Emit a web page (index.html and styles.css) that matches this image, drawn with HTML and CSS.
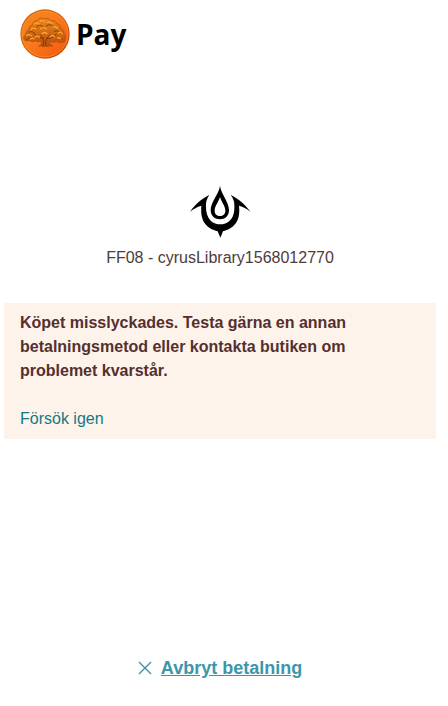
FILE: index.html
```html
<!DOCTYPE html>
<html lang="sv">
<head>
<meta charset="utf-8">
<meta name="viewport" content="width=device-width, initial-scale=1">
<title>Pay</title>
<link rel="stylesheet" href="styles.css">
</head>
<body>
<div class="page">
  <header class="brand">
    <svg class="brand-mark" viewBox="0 0 150 150" aria-hidden="true">
      <defs>
        <linearGradient id="coin" x1="0" y1="0" x2="1" y2="1">
          <stop offset="0" stop-color="#f08a1c"/>
          <stop offset=".45" stop-color="#fb7a1c"/>
          <stop offset="1" stop-color="#f2560f"/>
        </linearGradient>
        <linearGradient id="rim" x1="0" y1="0" x2="1" y2="1">
          <stop offset="0" stop-color="#c9660f"/>
          <stop offset=".5" stop-color="#e0630c"/>
          <stop offset="1" stop-color="#b93606"/>
        </linearGradient>
        <linearGradient id="leaf" x1="0" y1="0" x2="0" y2="1">
          <stop offset="0" stop-color="#ea851a"/>
          <stop offset="1" stop-color="#b9500d"/>
        </linearGradient>
      </defs>
      <circle cx="75" cy="75" r="74" fill="url(#rim)"/>
      <circle cx="75" cy="75" r="69" fill="url(#coin)" stroke="#ff9e38" stroke-width="2"/>
      <path fill="url(#leaf)" stroke="#a3480a" stroke-width="2" d="M13 92c-4-6-1-13 5-15-2-8 3-14 9-14-1-9 4-15 11-15 0-9 7-14 14-13 4-8 14-10 21-5 8-4 17-1 20 6 9-3 16 2 18 9 8 1 12 7 11 14 8 2 11 9 9 15 6 3 8 11 4 16 2 6-3 10-9 10-8 1-14-1-17-3-6 4-14 3-18 0l-2 6c2 4 6 6 10 8-8-1-11-1-14 2-5-2-11-2-16 0-4-3-8-3-13-1 5-3 9-6 9-10l-2-6c-6 3-12 2-16-1-7 4-15 3-19-1-7 2-14 2-15-2z"/>
      <g fill="none" stroke="#87380a" stroke-width="3" stroke-linecap="round">
        <path d="M69 110c5-15 0-24-8-33M77 110c-2-14 3-24 13-33M71 88c-11 0-21-5-27-13M80 89c13 0 22-5 29-14M20 91c8-7 15-5 20 0M108 91c7-6 13-5 20 0M27 70c8-5 14-1 17 5M103 67c7-4 13-1 17 5M50 54c4-7 13-7 19-1M79 51c6-6 15-5 20 1"/>
      </g>
      <g fill="none" stroke="#ffa332" stroke-width="4" stroke-linecap="round">
        <path d="M20 80c5-5 9-4 14 0M33 62c5-6 9-6 14-2M42 46c5-5 10-5 15-1M60 38c5-5 11-4 15 1M82 41c6-4 11-2 14 3M99 54c6-3 11 0 13 4M115 72c5-4 9-2 12 2M62 60c5-5 12-5 17 0M91 83c5-4 9-4 12 0M46 84c5-4 9-4 12 1M31 90c4-3 8-3 11 0M112 88c4-3 8-2 10 1M66 74c5-4 11-4 15 0"/>
      </g>
    </svg>
    <span class="brand-name">Pay</span>
  </header>

  <main class="content">
    <section class="merchant">
      <svg class="merchant-mark" viewBox="18 12 180 156" aria-hidden="true">
        <path d="M18 89C34 67 52 51 76 39C69 50 66 58 66 68C65 88 69 105 80 116C89 124 98 127 109 127C120 127 128 124 137 116C149 105 152 88 151 68C151 58 148 50 140 39C165 51 183 67 199 89C188 80 178 75 165 71C169 106 159 126 140 138C132 143 123 146 117 148C114 155 112 161 109 167C106 161 104 155 101 148C94 146 85 143 77 138C58 126 49 106 52 71C39 75 29 80 18 89Z"/>
        <path fill-rule="evenodd" d="M108 12C112 38 135 60 135 85C135 102 123 112 108 112C93 112 80 102 80 85C80 60 104 38 108 12ZM108 45C104 60 92 72 92 86C92 96 99 102 108 102C117 102 124 96 124 86C124 72 112 60 108 45Z"/>
      </svg>
      <p class="merchant-name">FF08 - cyrusLibrary1568012770</p>
    </section>

    <section class="notice" role="alert">
      <p class="notice-text">Köpet misslyckades. Testa gärna en annan betalningsmetod eller kontakta butiken om problemet kvarstår.</p>
      <a class="retry" href="#">Försök igen</a>
    </section>
  </main>

  <footer class="footer">
    <a class="cancel" href="#">
      <svg class="cancel-icon" viewBox="0 0 14 14" aria-hidden="true"><path d="M1 1l12 12M13 1L1 13"/></svg>
      <span class="cancel-label">Avbryt betalning</span>
    </a>
  </footer>
</div>
</body>
</html>
```
FILE: styles.css
```css
* {
  box-sizing: border-box;
}

body {
  margin: 0;
  background: #fff;
  color: #53302e;
  font: 16px/24px "Liberation Sans", Arial, sans-serif;
}

p {
  margin: 0;
}

.page {
  display: flex;
  flex-direction: column;
  min-height: 100vh;
  padding: 9px 12px 26px 4px;
}

.brand {
  display: flex;
  align-items: center;
  gap: 6px;
  padding-left: 16px;
}

.brand-mark {
  width: 50px;
  height: 50px;
}

.brand-name {
  color: #000;
  font: 700 28px/50px "Open Sans", "Noto Sans", sans-serif;
}

.content {
  flex: 1;
  padding-top: 127px;
}

.merchant {
  display: flex;
  flex-direction: column;
  align-items: center;
  gap: 8px;
}

.merchant-mark {
  width: 60px;
  height: 52px;
  fill: #000;
}

.merchant-name {
  color: #4f3b3b;
}

.notice {
  margin-top: 33px;
  padding: 8px 80px 8px 16px;
  background: #fef3eb;
}

.notice-text {
  margin-bottom: 24px;
  font-weight: 700;
}

.retry {
  color: #117886;
  text-decoration: none;
}

.footer {
  display: flex;
  justify-content: center;
}

.cancel {
  display: flex;
  align-items: center;
  gap: 9px;
  color: #3a97aa;
  font-size: 18px;
  font-weight: 700;
  text-decoration: none;
}

.cancel-icon {
  width: 14px;
  height: 14px;
  fill: none;
  stroke: #4690a8;
  stroke-width: 1.4;
}

.cancel-label {
  text-decoration: underline;
}
```
